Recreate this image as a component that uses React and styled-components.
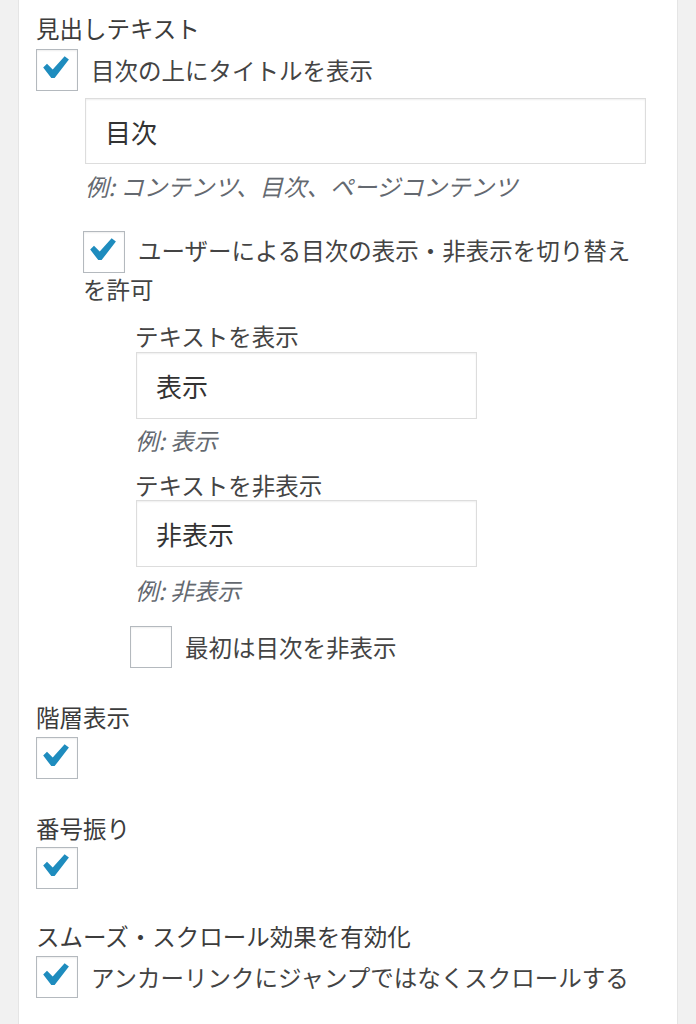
import React from "react";
import styled, { createGlobalStyle } from "styled-components";

const Global = createGlobalStyle`
  html, body {
    margin: 0;
    padding: 0;
    background: #f1f1f1;
  }
  body {
    font-family: "Noto Sans CJK JP", "Noto Sans", sans-serif;
    color: #444;
  }
`;

const Panel = styled.div`
  margin-left: 18px;
  width: 660px;
  min-height: 1024px;
  box-sizing: border-box;
  background: #fff;
  border-left: 1px solid #e5e5e5;
  border-right: 1px solid #e5e5e5;
  padding: 13px 31px 0 17px;
`;

const Heading = styled.div`
  font-size: 23.5px;
  line-height: 30px;
  margin-top: ${(p) => p.$top || 0}px;
  color: #3c3c3c;
`;

const Row = styled.label`
  display: flex;
  align-items: center;
  gap: 13px;
  margin-top: ${(p) => p.$top || 0}px;
  margin-left: ${(p) => p.$left || 0}px;
  font-size: 23.5px;
  line-height: 30px;
`;

const Box = styled.span`
  flex: none;
  display: inline-flex;
  align-items: center;
  justify-content: center;
  width: 42px;
  height: 42px;
  box-sizing: border-box;
  border: 1px solid #b4b9be;
  background: #fff;
  box-shadow: inset 0 1px 2px rgba(0, 0, 0, 0.07);
`;

const Indent = styled.div`
  margin-left: ${(p) => p.$left}px;
`;

const Field = styled.input`
  display: block;
  width: ${(p) => p.$width}px;
  height: ${(p) => p.$height || 66}px;
  box-sizing: border-box;
  margin: ${(p) => p.$top || 0}px 0 0 ${(p) => p.$left || 0}px;
  padding: 0 19px;
  border: 1px solid #ddd;
  box-shadow: inset 0 1px 2px rgba(0, 0, 0, 0.07);
  font-family: inherit;
  font-size: 26px;
  color: #333;
  background: #fff;
  outline: none;
`;

const Desc = styled.div`
  margin-top: ${(p) => p.$top || 7}px;
  font-size: 23.5px;
  line-height: 30px;
  font-style: italic;
  color: #646970;
`;

const SubLabel = styled.div`
  margin-top: ${(p) => p.$top || 0}px;
  font-size: 23.5px;
  line-height: 30px;
`;

const WrapLabel = styled.label`
  display: block;
  margin: 30px 0 0 -2px;
  font-size: 23.5px;
  line-height: 39px;

  ${Box} {
    vertical-align: middle;
    margin: -6px 13px -6px 0;
    position: relative;
    top: -2px;
  }
`;

function Check({ on }) {
  return (
    <Box>
      {on && (
        <svg width="42" height="42" viewBox="0 0 42 42">
          <polygon
            points="6.5,18.5 10.5,14.5 16.5,20.5 29,6.5 33.5,10 18.5,29.5 15,29.5"
            fill="#1e8cbe"
          />
        </svg>
      )}
    </Box>
  );
}

export default function App() {
  return (
    <>
      <Global />
      <Panel>
        <Heading>見出しテキスト</Heading>
        <Row $top={6}>
          <Check on />
          <span>目次の上にタイトルを表示</span>
        </Row>
        <Indent $left={49}>
          <Field $width={561} $top={7} defaultValue="目次" readOnly />
          <Desc>例: コンテンツ、目次、ページコンテンツ</Desc>
          <WrapLabel>
            <Check on />
            ユーザーによる目次の表示・非表示を切り替えを許可
          </WrapLabel>
          <Indent $left={50}>
            <SubLabel $top={12}>テキストを表示</SubLabel>
            <Field $width={341} $height={67} $top={1} $left={1} defaultValue="表示" readOnly />
            <Desc $top={6}>例: 表示</Desc>
            <SubLabel $top={15}>テキストを非表示</SubLabel>
            <Field $width={341} $height={67} $left={1} defaultValue="非表示" readOnly />
            <Desc $top={8}>例: 非表示</Desc>
            <Row $top={21} $left={-5}>
              <Check />
              <span>最初は目次を非表示</span>
            </Row>
          </Indent>
        </Indent>
        <Heading $top={34}>階層表示</Heading>
        <Row $top={5}>
          <Check on />
        </Row>
        <Heading $top={34}>番号振り</Heading>
        <Row $top={4}>
          <Check on />
        </Row>
        <Heading $top={32}>スムーズ・スクロール効果を有効化</Heading>
        <Row $top={5}>
          <Check on />
          <span>アンカーリンクにジャンプではなくスクロールする</span>
        </Row>
      </Panel>
    </>
  );
}
